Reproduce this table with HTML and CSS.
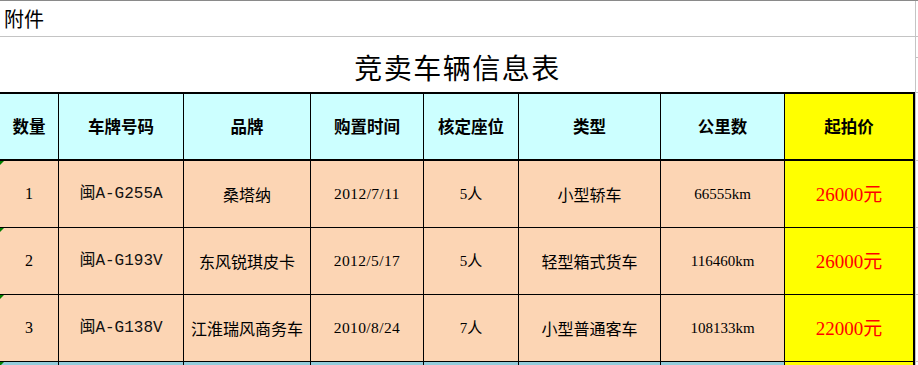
FILE: index.html
```html
<!DOCTYPE html>
<html lang="zh-CN">
<head>
<meta charset="utf-8">
<title>竞卖车辆信息表</title>
<link rel="stylesheet" href="styles.css">
</head>
<body>
<div class="sheet">
  <div class="main">
    <div class="topbar">附件</div>
    <div class="title">竞卖车辆信息表</div>
    <div class="grid">
      <div class="cell head">数量</div>
      <div class="cell head">车牌号码</div>
      <div class="cell head">品牌</div>
      <div class="cell head">购置时间</div>
      <div class="cell head">核定座位</div>
      <div class="cell head">类型</div>
      <div class="cell head">公里数</div>
      <div class="cell head price-head">起拍价</div>

      <div class="cell num"><span class="flag"></span>1</div>
      <div class="cell plate">闽A-G255A</div>
      <div class="cell cn">桑塔纳</div>
      <div class="cell date">2012/7/11</div>
      <div class="cell seat">5人</div>
      <div class="cell cn">小型轿车</div>
      <div class="cell km">66555km</div>
      <div class="cell price">26000元</div>

      <div class="cell num"><span class="flag"></span>2</div>
      <div class="cell plate">闽A-G193V</div>
      <div class="cell cn">东风锐琪皮卡</div>
      <div class="cell date">2012/5/17</div>
      <div class="cell seat">5人</div>
      <div class="cell cn">轻型箱式货车</div>
      <div class="cell km">116460km</div>
      <div class="cell price">26000元</div>

      <div class="cell num"><span class="flag"></span>3</div>
      <div class="cell plate">闽A-G138V</div>
      <div class="cell cn">江淮瑞风商务车</div>
      <div class="cell date">2010/8/24</div>
      <div class="cell seat">7人</div>
      <div class="cell cn">小型普通客车</div>
      <div class="cell km">108133km</div>
      <div class="cell price">22000元</div>

      <div class="cell next"><span class="flag"></span></div>
      <div class="cell next"></div>
      <div class="cell next"></div>
      <div class="cell next"></div>
      <div class="cell next"></div>
      <div class="cell next"></div>
      <div class="cell next"></div>
      <div class="cell next last"></div>
    </div>
  </div>
  <div class="gutter">
    <div class="g g1"></div>
    <div class="g g2"></div>
    <div class="g g3"></div>
    <div class="g g4"></div>
    <div class="g g5"></div>
    <div class="g g5"></div>
    <div class="g g5"></div>
  </div>
</div>
</body>
</html>
```
FILE: styles.css
```css
html, body {
  margin: 0;
  padding: 0;
  background: #ffffff;
}
body {
  width: 918px;
  height: 365px;
  overflow: hidden;
  font-family: "Noto Sans CJK SC", sans-serif;
  color: #000;
}
.sheet {
  display: flex;
  border-top: 1px solid #8a8a8a;
  width: 918px;
}
.main {
  width: 915px;
  border-right: 1px solid #c4c4c4;
  flex: none;
}
.gutter {
  width: 2px;
  flex: none;
}
.g {
  border-bottom: 1px solid #c4c4c4;
  box-sizing: border-box;
}
.g1 { height: 36px; }
.g2 { height: 21px; }
.g3 { height: 35px; }
.g4 { height: 68px; }
.g5 { height: 67px; }

.topbar {
  height: 35px;
  border-bottom: 1px solid #c4c4c4;
  display: flex;
  align-items: center;
  padding-left: 4px;
  font-size: 20px;
  line-height: 1;
}
.title {
  height: 55px;
  box-sizing: border-box;
  padding-top: 4px;
  display: flex;
  align-items: center;
  justify-content: center;
  font-size: 28px;
  letter-spacing: 1.5px;
  line-height: 1;
}
.grid {
  display: grid;
  grid-template-columns: 59px 125px 127px 113px 95px 142px 124px 128px;
  grid-template-rows: 67px 67px 67px 67px 3px;
  border-top: 2px solid #000;
  border-right: 2px solid #000;
  width: 913px;
}
.cell {
  position: relative;
  box-sizing: border-box;
  border-right: 1px solid #000;
  border-bottom: 1px solid #000;
  background: #fcd5b4;
  display: flex;
  align-items: center;
  justify-content: center;
  white-space: nowrap;
  line-height: 1;
}
.cell:nth-child(8n) {
  border-right: none;
}
.head {
  background: #ccffff;
  border-bottom: 2px solid #000;
  font-weight: bold;
  font-size: 16.5px;
}
.price-head {
  background: #ffff00;
}
.num {
  font-family: "Liberation Serif", "Noto Sans CJK SC", serif;
  font-size: 16px;
}
.plate {
  font-family: "Liberation Mono", "Noto Sans CJK SC", monospace;
  font-size: 16px;
  color: #111;
}
.cn {
  font-size: 16px;
}
.date {
  font-family: "Liberation Serif", "Noto Sans CJK SC", serif;
  font-size: 15.5px;
  letter-spacing: 0.4px;
}
.km {
  font-family: "Liberation Serif", "Noto Sans CJK SC", serif;
  font-size: 15px;
}
.seat {
  font-family: "Liberation Serif", "Noto Sans CJK SC", serif;
  font-size: 15px;
}
.price {
  background: #ffff00;
  color: #ff0000;
  font-family: "Liberation Serif", "Noto Sans CJK SC", serif;
  font-size: 19px;
}
.next {
  background: #92cddc;
  border-bottom: none;
}
.next.last {
  background: #ffff00;
}
.flag {
  position: absolute;
  left: 0;
  top: 0;
  width: 0;
  height: 0;
  border-top: 4px solid #008000;
  border-right: 4px solid transparent;
}
```
